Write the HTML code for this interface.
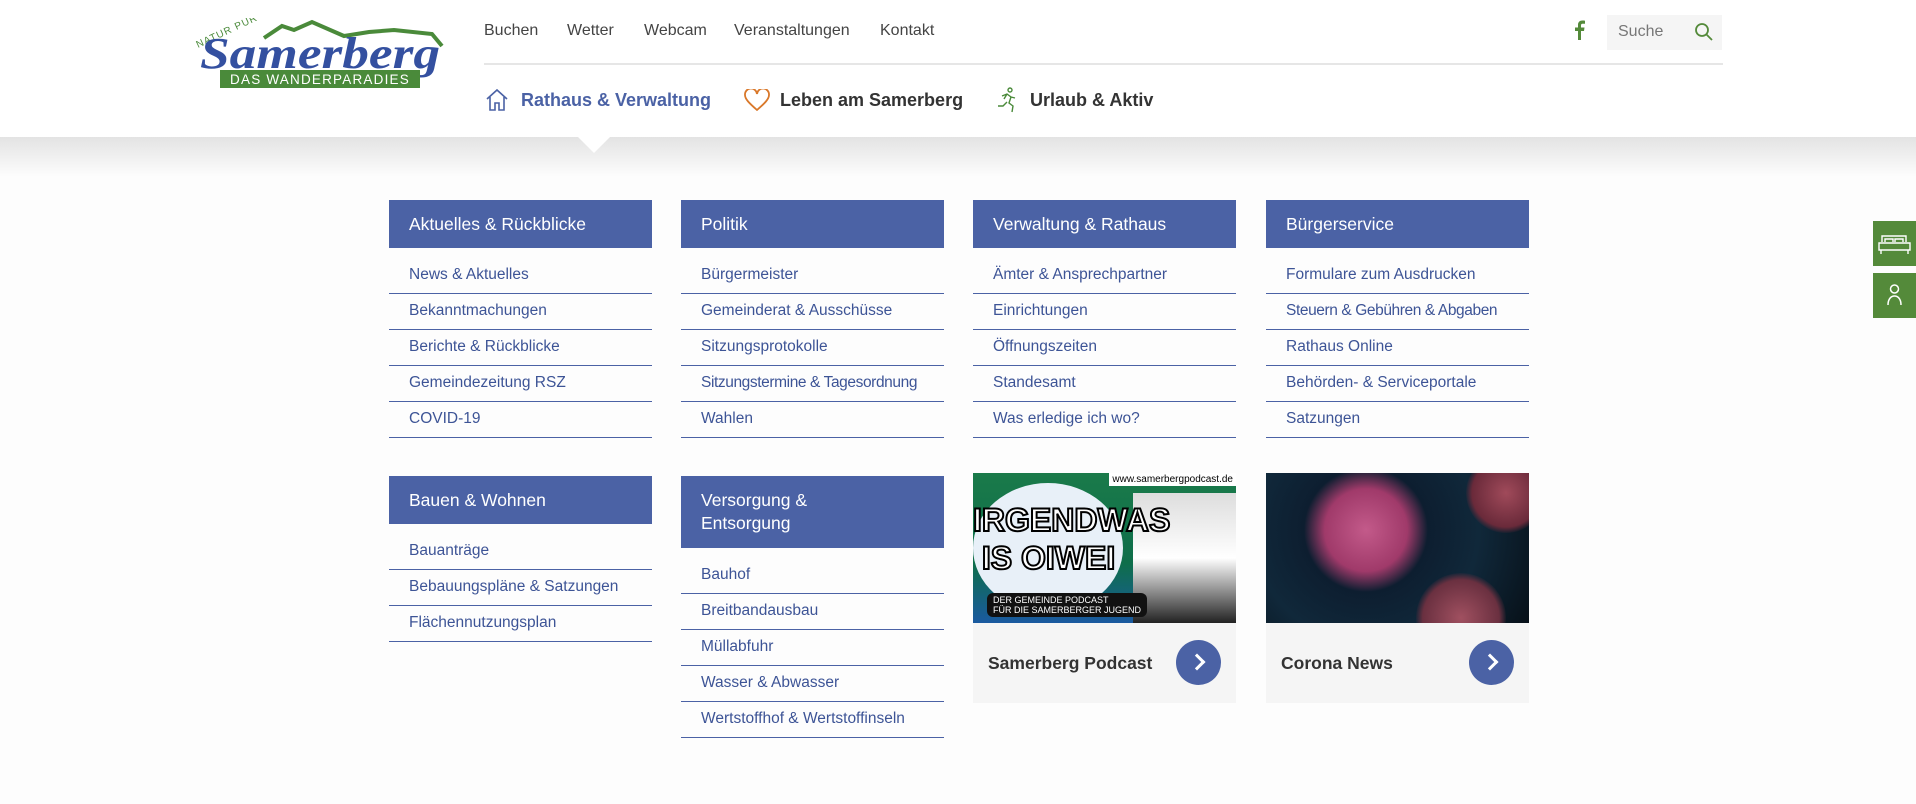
<!DOCTYPE html>
<html><head><meta charset="utf-8"><style>
*{margin:0;padding:0;box-sizing:border-box}
body{width:1916px;height:804px;overflow:hidden;background:#fdfdfd;font-family:"Liberation Sans",sans-serif;position:relative}
.hdr{position:absolute;left:0;top:0;width:1916px;height:137px;background:#fff}
.band{position:absolute;left:0;top:137px;width:1916px;height:40px;background:linear-gradient(#e3e3e3,#fdfdfd)}
.tri{position:absolute;left:578px;top:137px;width:0;height:0;border-left:16px solid transparent;border-right:16px solid transparent;border-top:16px solid #fff}
.top a{position:absolute;top:22px;font-size:16px;color:#444;text-decoration:none}
.sep{position:absolute;left:484px;top:63px;width:1239px;height:2px;background:#e6e6e6}
.main{position:absolute;top:90px;font-size:18px;font-weight:bold;color:#333}
.search{position:absolute;left:1607px;top:15px;width:115px;height:35px;background:#f5f5f5;font-size:16px;color:#777;padding:8px 0 0 11px}
.col{position:absolute;width:263px}
.hd{background:#4b62a5;color:#fff;font-size:17.5px;padding:13px 20px 0 20px;height:48px;line-height:23px}
.lk{font-size:15.5px;color:#3d5496;border-bottom:1.5px solid #4b62a5;height:36px;padding:8px 0 0 20px;white-space:nowrap}
.lks{margin-top:10px}
.card{position:absolute;width:263px;top:473px}
.img{height:150px}
.cap{height:80px;background:#f5f5f5;position:relative;font-size:17.5px;font-weight:bold;color:#333;padding:30px 0 0 15px}
.circ{position:absolute;right:15px;top:17px;width:45px;height:45px;border-radius:50%;background:#4b62a5}
.circ::after{content:"";position:absolute;left:15px;top:16px;width:9px;height:9px;border-right:3px solid #fff;border-top:3px solid #fff;transform:rotate(45deg)}
.side{position:absolute;left:1873px;width:43px;height:45px;background:#548a3a}
</style></head><body>
<div class="hdr"></div>
<div class="band"></div>
<div class="tri"></div>
<svg style="position:absolute;left:194px;top:18px" width="252" height="72" viewBox="0 0 252 72">
<text x="4" y="30" font-size="10" fill="#4a8a3a" font-family="Liberation Sans" transform="rotate(-25 4 30)" letter-spacing="1">NATUR PUR</text>
<path d="M70 20 L88 8 L100 12 L118 4 L150 18 L175 14 L200 12 L238 16 L248 28" fill="none" stroke="#4a8a3a" stroke-width="4"/>
<text x="6" y="50" font-size="44" font-style="italic" font-weight="bold" fill="#3450a0" font-family="Liberation Serif" textLength="240" lengthAdjust="spacingAndGlyphs">Samerberg</text>
<rect x="26" y="52" width="200" height="18" fill="#4a8a3a"/>
<text x="126" y="66" font-size="13.5" fill="#fff" text-anchor="middle" letter-spacing="1.2" font-family="Liberation Sans">DAS WANDERPARADIES</text>
</svg>
<div class="top"><a style="left:484px">Buchen</a><a style="left:567px">Wetter</a><a style="left:644px">Webcam</a><a style="left:734px">Veranstaltungen</a><a style="left:880px">Kontakt</a></div>
<svg style="position:absolute;left:1572px;top:20px" width="14" height="20" viewBox="0 0 14 20"><path d="M9 20V11h3l.5-3.5H9V5.5c0-1 .3-1.7 1.8-1.7H13V.7C12.5.6 11.5.5 10.3.5 7.8.5 6 2 6 4.8v2.7H3V11h3v9z" fill="#548a3a"/></svg>
<div class="search">Suche</div>
<svg style="position:absolute;left:1694px;top:22px" width="20" height="20" viewBox="0 0 20 20"><circle cx="8" cy="8" r="6" fill="none" stroke="#548a3a" stroke-width="1.8"/><path d="M12.5 12.5L18 18" stroke="#548a3a" stroke-width="1.8"/></svg>
<div class="sep"></div>
<svg style="position:absolute;left:485px;top:88px" width="24" height="24" viewBox="0 0 24 24"><path d="M2 11L12 2l10 9M5 9v13h5v-7h4v7h5V9" fill="none" stroke="#4b62a5" stroke-width="1.6"/></svg>
<div class="main" style="left:521px;color:#4b62a5">Rathaus &amp; Verwaltung</div>
<svg style="position:absolute;left:744px;top:89px" width="26" height="22" viewBox="0 0 26 22"><path d="M13 21C5 14 1 10 1 6a5.5 5.5 0 0 1 12-1 5.5 5.5 0 0 1 12 1c0 4-4 8-12 15z" fill="none" stroke="#d9782a" stroke-width="1.8"/></svg>
<div class="main" style="left:780px">Leben am Samerberg</div>
<svg style="position:absolute;left:995px;top:87px" width="24" height="26" viewBox="0 0 24 26"><circle cx="15" cy="3" r="2" fill="none" stroke="#4a8a3a" stroke-width="1.4"/><path d="M7 9l5-2 4 3-2 6 4 3-1 6M12 15l-4 4-5 0M16 10l4 1M12 7l-3 5" fill="none" stroke="#4a8a3a" stroke-width="1.4"/></svg>
<div class="main" style="left:1030px">Urlaub &amp; Aktiv</div>

<div class="col" style="left:389px;top:200px"><div class="hd">Aktuelles &amp; Rückblicke</div><div class="lks"><div class="lk">News &amp; Aktuelles</div><div class="lk">Bekanntmachungen</div><div class="lk">Berichte &amp; Rückblicke</div><div class="lk">Gemeindezeitung RSZ</div><div class="lk">COVID-19</div></div></div>
<div class="col" style="left:681px;top:200px"><div class="hd">Politik</div><div class="lks"><div class="lk">Bürgermeister</div><div class="lk">Gemeinderat &amp; Ausschüsse</div><div class="lk">Sitzungsprotokolle</div><div class="lk" style="letter-spacing:-0.4px">Sitzungstermine &amp; Tagesordnung</div><div class="lk">Wahlen</div></div></div>
<div class="col" style="left:973px;top:200px"><div class="hd">Verwaltung &amp; Rathaus</div><div class="lks"><div class="lk">Ämter &amp; Ansprechpartner</div><div class="lk">Einrichtungen</div><div class="lk">Öffnungszeiten</div><div class="lk">Standesamt</div><div class="lk">Was erledige ich wo?</div></div></div>
<div class="col" style="left:1266px;top:200px"><div class="hd">Bürgerservice</div><div class="lks"><div class="lk">Formulare zum Ausdrucken</div><div class="lk" style="letter-spacing:-0.4px">Steuern &amp; Gebühren &amp; Abgaben</div><div class="lk">Rathaus Online</div><div class="lk">Behörden- &amp; Serviceportale</div><div class="lk">Satzungen</div></div></div>
<div class="col" style="left:389px;top:476px"><div class="hd">Bauen &amp; Wohnen</div><div class="lks"><div class="lk">Bauanträge</div><div class="lk">Bebauungspläne &amp; Satzungen</div><div class="lk">Flächennutzungsplan</div></div></div>
<div class="col" style="left:681px;top:476px"><div class="hd" style="height:72px">Versorgung &amp;<br>Entsorgung</div><div class="lks"><div class="lk">Bauhof</div><div class="lk">Breitbandausbau</div><div class="lk">Müllabfuhr</div><div class="lk">Wasser &amp; Abwasser</div><div class="lk">Wertstoffhof &amp; Wertstoffinseln</div></div></div>

<div class="card" style="left:973px"><div class="img" style="background:linear-gradient(180deg,#1a7a4a 0%,#0e6e4a 60%,#1a5aa0 100%);position:relative;overflow:hidden">
<div style="position:absolute;left:0;top:10px;width:150px;height:130px;border-radius:50%;background:#e8f0f8"></div>
<div style="position:absolute;left:160px;top:20px;width:103px;height:130px;background:linear-gradient(#ddd,#fff 50%,#222)"></div>
<div style="position:absolute;left:0;top:28px;font:bold 32px 'Liberation Sans';color:#fff;-webkit-text-stroke:2px #000;line-height:38px">IRGENDWAS<br>&nbsp;IS OIWEI</div>
<div style="position:absolute;right:0;top:0;background:#fff;font-size:10px;padding:1px 3px">www.samerbergpodcast.de</div>
<div style="position:absolute;left:14px;top:120px;background:#111;color:#fff;font-size:9px;padding:2px 6px;border-radius:6px">DER GEMEINDE PODCAST<br>FÜR DIE SAMERBERGER JUGEND</div>
</div><div class="cap">Samerberg Podcast<div class="circ"></div></div></div>
<div class="card" style="left:1266px"><div class="img" style="background:radial-gradient(circle at 38% 38%,#c35a8a 0,#a03a6a 22%,#0d1e30 33%,#10283a 60%,#071018 100%);position:relative;overflow:hidden">
<div style="position:absolute;left:200px;top:-20px;width:80px;height:80px;border-radius:50%;background:radial-gradient(#a04a5a,#6a2a3a 60%,transparent 72%)"></div>
<div style="position:absolute;left:150px;top:100px;width:90px;height:90px;border-radius:50%;background:radial-gradient(#a05060,#6a3040 60%,transparent 72%)"></div>
</div><div class="cap">Corona News<div class="circ"></div></div></div>

<div class="side" style="top:221px"><svg width="43" height="45" viewBox="0 0 43 45"><path d="M9 21v-6h24v6M6 22h31v7H6zM8 29v4M35 29v4M12 21v-3h8v3M22 21v-3h8v3" fill="none" stroke="#fff" stroke-width="1.4"/></svg></div>
<div class="side" style="top:273px"><svg width="43" height="45" viewBox="0 0 43 45"><circle cx="21.5" cy="16" r="4" fill="none" stroke="#fff" stroke-width="1.5"/><path d="M15 32c0-6 3-9 6.5-9s6.5 3 6.5 9" fill="none" stroke="#fff" stroke-width="1.5"/></svg></div>
</body></html>
